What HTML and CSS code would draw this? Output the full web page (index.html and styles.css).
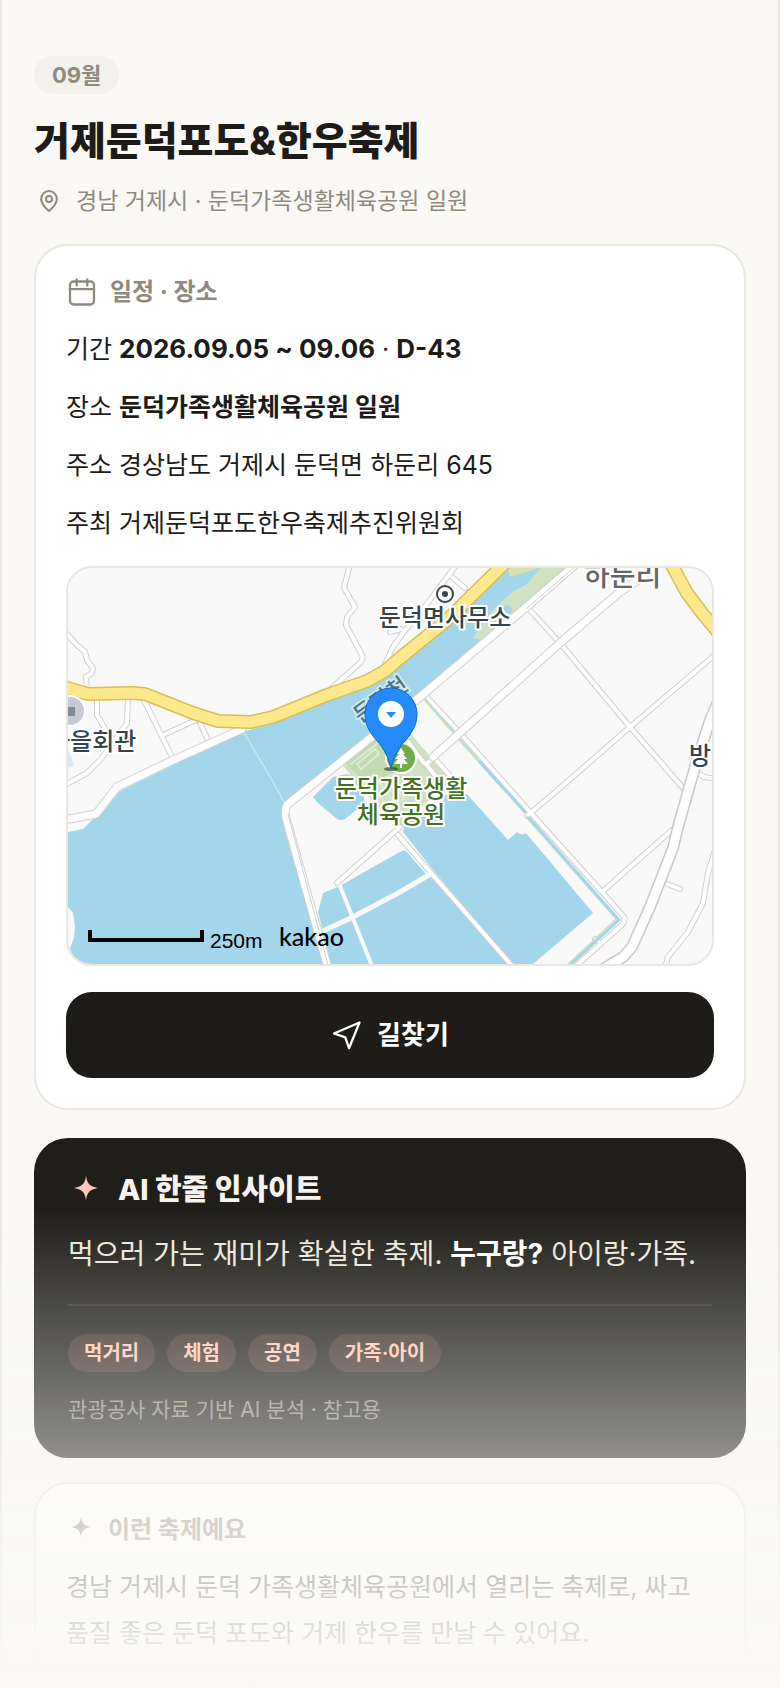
FILE: index.html
```html
<!DOCTYPE html>
<html lang="ko">
<head>
    <meta charset="UTF-8">
    <meta name="viewport" content="width=device-width, initial-scale=1.0">
    <title>거제둔덕포도&amp;한우축제</title>
    <link rel="stylesheet" href="styles.css">
</head>
<body>
    <main class="page">
        <header class="header">
            <span class="month">09월</span>
            <h1>거제둔덕포도&amp;한우축제</h1>
            <p class="location">
                <svg class="icon-pin" viewBox="0 0 30 30" aria-hidden="true">
                    <path d="M15 25c-1.500-1.400-7.800-6.200-7.800-12.100a7.800 7.800 0 0 1 15.600 0c0 5.900-6.300 10.700-7.800 12.100z"/>
                    <circle cx="15" cy="13" r="3"/>
                </svg>
                <span>경남 거제시 · 둔덕가족생활체육공원 일원</span>
            </p>
        </header>

        <section class="card">
            <h2 class="card-title">
                <svg class="icon" viewBox="0 0 32 32" aria-hidden="true">
                    <rect x="4" y="5.500" width="24" height="23" rx="3.500"/>
                    <path d="M4 13.200h24M10.700 3.500v6M21.300 3.500v6"/>
                </svg>
                <span>일정 · 장소</span>
            </h2>
            <div class="rows">
                <p>기간 <b class="date">2026.09.05 ~ 09.06</b> · <b class="date">D-43</b></p>
                <p>장소 <b>둔덕가족생활체육공원 일원</b></p>
                <p>주소 경상남도 거제시 둔덕면 하둔리 645</p>
                <p>주최 거제둔덕포도한우축제추진위원회</p>
            </div>

            <div class="map">
                <svg viewBox="0 0 644 396" preserveAspectRatio="xMidYMid slice" role="img" aria-label="둔덕가족생활체육공원 지도">
                    <!-- water -->
                    <g class="water">
                        <path d="M175 164 72 212 115 192 52 223 30 249 24 252 15 261 0 264V339L5 345 7 359 6 370 2 380 6 396H255L215 255 213 242 216 235 272 192 304 164 345 129 459 39 504 0H440L312 112 302 117 205 155z"/>
                        <path d="M279 206 265 209 245 229 250 235 269 251Q273 253 277 251L297 235 292 212z"/>
                        <path d="M398 225 440 272 449 264Q453 268 458 265L525 345 465 396H444L365 302 335 264 337 255 375 235 377 227z"/>
                        <path d="M272 318 305 299 332 284Q336 281 339 284L357 305 365 311 440 396H263L250 344 255 325z"/>
                    </g>
                    <path class="bank" d="M472 0 459 16 444 24 425 42 405 70 415 72 459 38 500 0z"/>
                    <circle class="water" cx="439" cy="42" r="5"/>
                    <path class="sand" d="M440 0h31l-16 5-13 4z"/>
                    <path class="pale" d="M0 180l6 18-6 2z"/>
                    <path class="shore" d="M175 163 204 212 216 234"/>

                    <!-- park -->
                    <path class="park" d="M272 194 310 163 338 160 382 212 367 225 334 260 309 239z"/>
                    <path class="park-dark" d="M276 194 310 166 330 166 340 200 300 217z"/>
                    <g class="park-line">
                        <path d="M289 196 307 181 311 186 293 201zM283 196 310 175M300 217 340 200 352 220 322 240zM310 213 326 235M320 209 336 231"/>
                    </g>

                    <!-- streets: casing first, then the surface -->
                    <g class="casing">
                        <path d="M282-4 276 20 287 39 279 49 278 57 294 87Q296 91 292 95L264 120"/>
                        <path d="M-2 65 9 77 17 84 19 92 25 100 24 105 18 109 19 122"/>
                        <path d="M29 130V147L39 164"/>
                        <path d="M60 130 59 155 42 179 32 192 19 205-3 217"/>
                        <path d="M76 132 104 189M95 167 128 152M132 155 139 170"/>
                        <path d="M389-4 362 32 335 65 325 79 317 96M384 9 397 20M322 64 333 61"/>
                        <path d="M460 40 492 75 562 159 615 220"/>
                        <path d="M648 86 562 159 499 214 459 248"/>
                        <path d="M355 125 392 165 462 244 534 324 556 349Q558 353 554 357L508 398"/>
                        <path d="M534 324 604 262M599 316 612 321M627 203 636 209 648 211"/>
                        <path d="M646 285 640 305 635 335 620 364 600 389 597 400"/>
                        <path d="M340 174 355 194Q358 199 365 189M357 195 375 217M368 192 384 210"/>
                        <path d="M330 267 445 399M332 259 269 315M527 371 531 374"/>
                    </g>
                    <g class="surface">
                        <path d="M282-4 276 20 287 39 279 49 278 57 294 87Q296 91 292 95L264 120"/>
                        <path d="M-2 65 9 77 17 84 19 92 25 100 24 105 18 109 19 122"/>
                        <path d="M29 130V147L39 164"/>
                        <path d="M60 130 59 155 42 179 32 192 19 205-3 217"/>
                        <path d="M76 132 104 189M95 167 128 152M132 155 139 170"/>
                        <path d="M389-4 362 32 335 65 325 79 317 96M384 9 397 20M322 64 333 61"/>
                        <path d="M460 40 492 75 562 159 615 220"/>
                        <path d="M648 86 562 159 499 214 459 248"/>
                        <path d="M355 125 392 165 462 244 534 324 556 349Q558 353 554 357L508 398"/>
                        <path d="M534 324 604 262M599 316 612 321M627 203 636 209 648 211"/>
                        <path d="M646 285 640 305 635 335 620 364 600 389 597 400"/>
                        <path d="M340 174 355 194Q358 199 365 189M357 195 375 217M368 192 384 210"/>
                        <path d="M330 267 445 399M332 259 269 315M527 371 531 374"/>
                    </g>
                    <path class="stream-bank" d="M354 128 391 171 435 220M459 249 549 351 501 396"/>
                    <path class="stream thin" d="M356 130 391 170 412 194"/>
                    <path class="stream" d="M412 194 457 244M461 250 551 352 502 397"/>
                    <path class="dike" d="M272 318 304 398"/>
                    <path class="dike wide" d="M255 363 285 349 332 324 361 307"/>

                    <g class="casing mid">
                        <path d="M508-4 456 41 346 134 305 168 220 236Q216 239 218 250L260 400"/>
                        <path d="M174 161 99 195 49 219 28 246-4 252"/>
                        <path d="M575 9 552 24 492 75 365 189"/>
                    </g>
                    <g class="surface mid">
                        <path d="M508-4 456 41 346 134 305 168 220 236Q216 239 218 250L260 400"/>
                        <path d="M174 161 99 195 49 219 28 246-4 252"/>
                        <path d="M575 9 552 24 492 75 365 189"/>
                    </g>
                    <path class="center-line" d="M508-2 458 41M220 246 260 397"/>
                    <path class="casing big" d="M650 134 642 152 627 199 610 259 605 280 582 339 564 379 555 389 535 401"/>
                    <path class="surface big" d="M650 134 642 152 627 199 610 259 605 280 582 339 564 379 555 389 535 401"/>

                    <!-- highway -->
                    <g class="highway-edge">
                        <path d="M-4 119 20 126 64 125 77 126 125 145 150 153 183 154 205 149 259 127 299 113 317 103 332 90 379 52 440-8"/>
                        <path d="M601-8 619 25 634 45 650 64"/>
                    </g>
                    <g class="highway">
                        <path d="M-4 119 20 126 64 125 77 126 125 145 150 153 183 154 205 149 259 127 299 113 317 103 332 90 379 52 440-8"/>
                        <path d="M601-8 619 25 634 45 650 64"/>
                    </g>

                    <!-- places -->
                    <circle cx="2" cy="143" r="15" fill="#c9cbd2" stroke="#fff" stroke-width="2"/>
                    <rect x="-2" y="139" width="9" height="9" fill="#7e8b92"/>
                    <circle cx="377" cy="26" r="8" fill="#fff" stroke="#3b4650" stroke-width="2"/>
                    <circle cx="377" cy="26" r="3" fill="#3b4650"/>
                    <text class="label" x="377" y="58" text-anchor="middle">둔덕면사무소</text>
                    <text class="label" x="-20" y="182">마을회관</text>
                    <text class="label" x="621" y="196">방</text>
                    <text class="label region" x="516" y="18">하둔리</text>
                    <text class="label river" transform="translate(317 138) rotate(-36)" text-anchor="middle">둔덕천</text>

                    <circle cx="333" cy="190" r="15" fill="#70ae4c" stroke="#fff" stroke-width="2"/>
                    <path fill="#fff" d="M333 180l4 6h-2l4 5h-3l4 5h-6v4h-2v-4h-6l4-5h-3l4-5h-2z"/>
                    <text class="label green" x="333" y="229" text-anchor="middle">둔덕가족생활</text>
                    <text class="label green" x="333" y="255" text-anchor="middle">체육공원</text>

                    <ellipse cx="323" cy="201" rx="7" ry="2" fill="#26382a" opacity=".6"/>
                    <path fill="#258bfa" stroke="#1762c4" d="M323 201c-2-11-7-20-13-27-7-8-13-16-13-28a26 26 0 0 1 52 0c0 12-6 20-13 28-6 7-11 16-13 27z"/>
                    <circle cx="323" cy="146" r="13" fill="#fff"/>
                    <path fill="#258bfa" d="M318 144h10l-5 6z"/>

                    <path class="scale" d="M22 362v10h112v-10"/>
                    <text class="scale-text" x="142" y="380">250m</text>
                    <text class="brand" x="211" y="378">kakao</text>
                </svg>
            </div>

            <button class="btn" type="button">
                <svg class="icon" viewBox="0 0 32 32" aria-hidden="true">
                    <path d="M28.500 3.500 3 14.500l11.300 3.800L18 29.200z"/>
                </svg>
                <span>길찾기</span>
            </button>
        </section>

        <section class="insight">
            <h2>
                <svg viewBox="0 0 36 36" aria-hidden="true">
                    <path d="M18 4c1.300 7.800 3.300 10.300 12 12-8.700 1.700-10.700 4.200-12 12-1.300-7.800-3.300-10.300-12-12 8.700-1.700 10.700-4.200 12-12z"/>
                </svg>
                <span>AI 한줄 인사이트</span>
            </h2>
            <p class="summary">먹으러 가는 재미가 확실한 축제. <b>누구랑?</b> 아이랑·가족.</p>
            <ul class="tags">
                <li>먹거리</li>
                <li>체험</li>
                <li>공연</li>
                <li>가족·아이</li>
            </ul>
            <p class="note">관광공사 자료 기반 AI 분석 · 참고용</p>
        </section>

        <section class="card about">
            <h2 class="card-title">
                <svg class="icon solid" viewBox="0 0 32 32" aria-hidden="true">
                    <path d="M15 3c1 6.500 2.800 8.600 10 10-7.200 1.400-9 3.500-10 10-1-6.500-2.800-8.600-10-10 7.200-1.400 9-3.500 10-10z"/>
                </svg>
                <span>이런 축제예요</span>
            </h2>
            <p>경남 거제시 둔덕 가족생활체육공원에서 열리는 축제로, 싸고 품질 좋은 둔덕 포도와 거제 한우를 만날 수 있어요.</p>
        </section>
    </main>
    <div class="fade"></div>
</body>
</html>
```
FILE: styles.css
```css
* {
    box-sizing: border-box;
}

body {
    margin: 0;
    font-family: Inter, 'Noto Sans CJK KR', sans-serif;
    font-size: 25px;
    color: #1d1c18;
    background: #faf9f5;
    word-break: keep-all;
}

h1, h2, p, ul {
    margin: 0;
    padding: 0;
}

svg {
    display: block;
    flex: none;
}

.page {
    min-height: 100vh;
    padding: 56px 32px 0;
    border: solid #e9e7e0;
    border-width: 0 2px;
}

.header {
    margin-bottom: 24px;
}

.month {
    display: block;
    width: fit-content;
    padding: 0 18px;
    border-radius: 19px;
    background: #f2f1ec;
    color: #8f8a7e;
    font-size: 22px;
    font-weight: 700;
    line-height: 38px;
}

h1 {
    margin: 22px 0 16px;
    font-size: 39px;
    font-weight: 800;
    line-height: 50px;
}

.location {
    display: flex;
    align-items: center;
    gap: 12px;
    color: #8f8a7e;
    font-size: 23px;
    line-height: 38px;
}

.icon-pin {
    width: 30px;
    height: 30px;
    fill: none;
    stroke: currentColor;
    stroke-width: 2;
}

.card {
    padding: 30px;
    border: 2px solid #e9e7e0;
    border-radius: 34px;
    background: #fff;
}

.card-title {
    display: flex;
    align-items: center;
    gap: 12px;
    color: #8f8a7e;
    font-size: 24px;
    font-weight: 700;
    line-height: 32px;
}

.icon {
    width: 32px;
    height: 32px;
    fill: none;
    stroke: currentColor;
    stroke-width: 2.3;
    stroke-linecap: round;
    stroke-linejoin: round;
}

.icon.solid {
    fill: currentColor;
    stroke: none;
}

.rows {
    display: flex;
    flex-direction: column;
    gap: 18px;
    margin: 21px 0 23px;
    line-height: 40px;
}

.date {
    font-size: 26px;
}

.map {
    overflow: hidden;
    height: 400px;
    border: 2px solid #e9e7e0;
    border-radius: 26px;
    background: #f9f9f9;
}

.map svg {
    width: 100%;
    height: 100%;
}

.map path {
    stroke-linejoin: round;
    stroke-linecap: round;
}

.water {
    fill: #a3d6eb;
}

.bank, .park {
    fill: #d0e2c2;
}

.park-dark {
    fill: #c2dab0;
}

.park-line {
    fill: none;
    stroke: #dcead2;
    stroke-width: 2;
}

.sand {
    fill: #d9dfae;
}

.pale {
    fill: #dbe8f0;
}

.shore {
    fill: none;
    stroke: #d9edf5;
}

.casing {
    fill: none;
    stroke: #d0d0d0;
    stroke-width: 6;
}

.surface {
    fill: none;
    stroke: #fff;
    stroke-width: 4;
}

.casing.mid {
    stroke-width: 9;
}

.surface.mid {
    stroke-width: 7;
}

.casing.big {
    stroke: #c9c9c9;
    stroke-width: 12;
}

.surface.big {
    stroke-width: 9;
}

.center-line {
    fill: none;
    stroke: #d0d0d0;
}

.stream-bank {
    fill: none;
    stroke: #d3e3c6;
    stroke-width: 3;
}

.stream {
    fill: none;
    stroke: #a3d6e6;
    stroke-width: 3;
}

.stream.thin {
    stroke-width: 1;
}

.dike {
    fill: none;
    stroke: #f9f9f9;
    stroke-width: 4;
}

.dike.wide {
    stroke-width: 5;
}

.highway-edge {
    fill: none;
    stroke: #d5bf58;
    stroke-width: 14;
}

.highway {
    fill: none;
    stroke: #ffe98c;
    stroke-width: 11;
}

.label {
    fill: #35434d;
    stroke: #fff;
    stroke-width: 4;
    stroke-linejoin: round;
    paint-order: stroke;
    font-family: 'Noto Sans CJK KR', sans-serif;
    font-size: 24px;
    font-weight: 500;
}

.label.region {
    fill: #666;
    font-size: 28px;
}

.label.river {
    fill: #48788e;
    stroke: #cfe9f4;
    font-size: 22px;
}

.label.green {
    fill: #41701f;
}

.scale {
    fill: none;
    stroke: #000;
    stroke-width: 4;
}

.map .scale {
    stroke-linecap: butt;
    stroke-linejoin: miter;
}

.scale-text {
    font-family: 'Liberation Sans', sans-serif;
    font-size: 21px;
}

.brand {
    font-family: Lato, sans-serif;
    font-size: 25px;
    font-weight: 500;
}

.btn {
    display: flex;
    align-items: center;
    justify-content: center;
    gap: 14px;
    width: 100%;
    height: 86px;
    margin-top: 26px;
    padding: 0;
    border: none;
    border-radius: 26px;
    background: #1d1c18;
    color: #fff;
    font-family: inherit;
    font-size: 26px;
    font-weight: 700;
    line-height: 32px;
    cursor: pointer;
}

.insight {
    margin: 28px 0 24px;
    padding: 34px;
    border-radius: 34px;
    background: #1f1e1a;
    color: #ece8dd;
}

.insight h2 {
    display: flex;
    align-items: center;
    gap: 14px;
    color: #f5f3ee;
    font-size: 29px;
    font-weight: 800;
    line-height: 34px;
}

.insight h2 svg {
    width: 36px;
    height: 36px;
    fill: #ffc9b5;
}

.summary {
    margin-top: 23px;
    padding-bottom: 27px;
    border-bottom: 2px solid #34332f;
    font-size: 28px;
    line-height: 46px;
}

.summary b {
    color: #fff;
}

.tags {
    display: flex;
    flex-wrap: wrap;
    gap: 12px;
    margin: 28px 0 24px;
    list-style: none;
}

.tags li {
    padding: 0 16px;
    border-radius: 19px;
    background: #3f302b;
    color: #ffc9b5;
    font-size: 20px;
    font-weight: 700;
    line-height: 38px;
}

.note {
    color: #8f8a7e;
    font-size: 21px;
    line-height: 28px;
}

.about {
    padding-bottom: 26px;
}

.about .card-title {
    gap: 10px;
}

.about p {
    margin-top: 18px;
    line-height: 46px;
}

.fade {
    position: fixed;
    right: 0;
    bottom: 0;
    left: 0;
    height: 480px;
    background: linear-gradient(rgba(250, 249, 245, 0), #faf9f5);
    pointer-events: none;
}
```
